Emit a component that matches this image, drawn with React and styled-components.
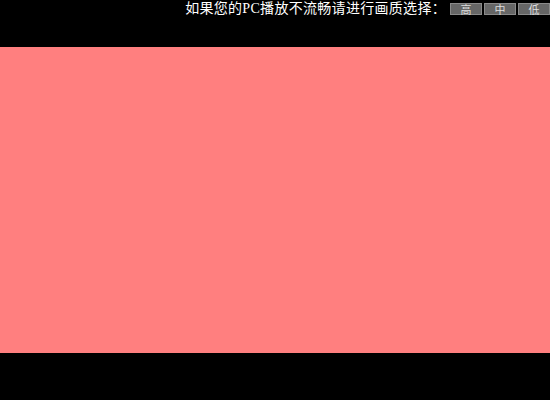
import styled, { createGlobalStyle } from "styled-components";

const GlobalStyle = createGlobalStyle`
  html, body {
    margin: 0;
    padding: 0;
    background: #000;
  }
`;

const Page = styled.div`
  width: 550px;
  height: 400px;
  background: #000;
  display: flex;
  flex-direction: column;
  overflow: hidden;
`;

const TopBar = styled.div`
  height: 47px;
  display: flex;
  justify-content: flex-end;
  align-items: flex-start;
  padding-top: 1px;
  box-sizing: border-box;
`;

const Hint = styled.span`
  color: #fff;
  font-family: "Liberation Serif", "Noto Sans CJK SC", serif;
  font-size: 14px;
  line-height: 16px;
  letter-spacing: 0.3px;
  margin-right: 2px;
`;

const QualityButton = styled.button`
  width: 32px;
  height: 12px;
  margin: 2px 0 0 2px;
  padding: 0;
  border: 1px solid #8a8a8a;
  background: #666;
  color: #ddd;
  font-family: "Noto Sans CJK SC", sans-serif;
  font-size: 11px;
  line-height: 10px;
  cursor: pointer;
`;

const Stage = styled.div`
  height: 306px;
  background: #ff7f7f;
`;

const App = () => {
  return (
    <Page>
      <GlobalStyle />
      <TopBar>
        <Hint>如果您的PC播放不流畅请进行画质选择：</Hint>
        <QualityButton>高</QualityButton>
        <QualityButton>中</QualityButton>
        <QualityButton>低</QualityButton>
      </TopBar>
      <Stage />
    </Page>
  );
};

export default App;
